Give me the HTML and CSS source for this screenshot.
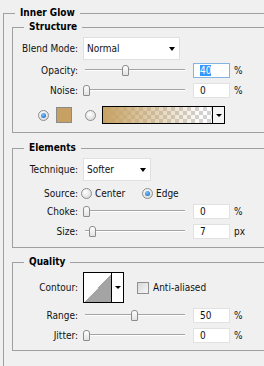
FILE: index.html
```html
<!DOCTYPE html>
<html>
<head>
<meta charset="utf-8">
<title>Inner Glow</title>
<link rel="stylesheet" href="styles.css">
</head>
<body>
<fieldset class="panel">
  <legend>Inner Glow</legend>

  <fieldset class="group">
    <legend>Structure</legend>
    <div class="rows">
      <div class="row tall">
        <span class="lbl">Blend Mode:</span>
        <div class="select blend">Normal</div>
      </div>
      <div class="row tight">
        <span class="lbl">Opacity:</span>
        <div class="slider"><span class="thumb" style="left:39px"></span></div>
        <div class="num focus"><span class="sel">40</span></div>
        <span class="unit">%</span>
      </div>
      <div class="row">
        <span class="lbl">Noise:</span>
        <div class="slider"><span class="thumb" style="left:0px"></span></div>
        <div class="num">0</div>
        <span class="unit">%</span>
      </div>
      <div class="row colors">
        <span class="radio on first"></span>
        <span class="swatch"></span>
        <span class="radio second"></span>
        <div class="grad"><span class="ramp"></span><span class="drop"></span></div>
      </div>
    </div>
  </fieldset>

  <fieldset class="group elements">
    <legend>Elements</legend>
    <div class="rows">
      <div class="row tall">
        <span class="lbl">Technique:</span>
        <div class="select technique">Softer</div>
      </div>
      <div class="row">
        <span class="lbl">Source:</span>
        <label class="opt center"><span class="radio"></span>Center</label>
        <label class="opt"><span class="radio on"></span>Edge</label>
      </div>
      <div class="row tight">
        <span class="lbl">Choke:</span>
        <div class="slider"><span class="thumb" style="left:0px"></span></div>
        <div class="num">0</div>
        <span class="unit">%</span>
      </div>
      <div class="row">
        <span class="lbl">Size:</span>
        <div class="slider"><span class="thumb" style="left:6px"></span></div>
        <div class="num">7</div>
        <span class="unit">px</span>
      </div>
    </div>
  </fieldset>

  <fieldset class="group quality">
    <legend>Quality</legend>
    <div class="rows">
      <div class="row contour-row">
        <span class="lbl">Contour:</span>
        <div class="contour"><span class="curve"></span><span class="drop"></span></div>
        <span class="check"></span>
        <span class="check-text">Anti-aliased</span>
      </div>
      <div class="row">
        <span class="lbl">Range:</span>
        <div class="slider"><span class="thumb" style="left:48px"></span></div>
        <div class="num">50</div>
        <span class="unit">%</span>
      </div>
      <div class="row">
        <span class="lbl">Jitter:</span>
        <div class="slider"><span class="thumb" style="left:0px"></span></div>
        <div class="num">0</div>
        <span class="unit">%</span>
      </div>
    </div>
  </fieldset>
</fieldset>
</body>
</html>
```

FILE: styles.css
```css
body {
  margin:0;
  background:#f0f0f0;
  font-family:"DejaVu Sans Condensed", "DejaVu Sans", sans-serif;
  font-size:10px;
  color:#111;
  overflow:hidden;
}

fieldset {
  min-width:0;
}

legend {
  font-weight:bold;
  line-height:14px;
  padding:0 5px;
  color:#000;
}

.panel {
  margin:6px 0 0 3px;
  padding:0 0 0 8px;
  border:0;
  border-top:1px solid #a0a0a0;
  border-left:1px solid #a0a0a0;
  min-height:366px;
}

.panel > legend {
  margin-left:3px;
}

.group {
  margin:0;
  padding:3px 0 7px;
  border:1px solid #a0a0a0;
  border-right:0;
}

.group > legend {
  margin-left:11px;
}

.group.elements {
  margin-top:8px;
  padding-bottom:8px;
}

.group.quality {
  margin-top:7px;
}

.rows {
  display:flex;
  flex-direction:column;
  gap:5px;
}

.row {
  display:flex;
  align-items:center;
  height:15px;
}

.row.tall {
  height:23px;
}

.row.tight {
  margin-top:-2px;
}

.lbl {
  width:65px;
  flex:none;
  text-align:right;
}

/* dropdowns */
.select {
  margin-left:5px;
  height:23px;
  box-sizing:border-box;
  background:#fff;
  border:1px solid #e0e0e0;
  display:flex;
  align-items:center;
  justify-content:space-between;
  padding:0 4px 0 3px;
}

.select::after {
  content:"";
  border-left:3.5px solid transparent;
  border-right:3.5px solid transparent;
  border-top:4px solid #000;
}

.select.blend {
  width:97px;
}

.select.technique {
  width:68px;
}

/* sliders */
.slider {
  position:relative;
  width:102px;
  height:15px;
  margin-left:5px;
  flex:none;
}

.slider::before {
  content:"";
  position:absolute;
  left:2px;
  right:0;
  top:6px;
  border-top:1px solid #a4a4a4;
  border-bottom:1px solid #fff;
}

.thumb {
  position:absolute;
  top:2px;
  width:7px;
  height:11px;
  box-sizing:border-box;
  border:1px solid #8c8c8c;
  border-radius:3px 3px 1px 1px;
  background:linear-gradient(#fff, #e2e2e2);
}

.num {
  margin-left:8px;
  width:37px;
  height:15px;
  box-sizing:border-box;
  background:#fff;
  border:1px solid #e2e2e2;
  padding-left:6px;
  line-height:13px;
  flex:none;
}

.num.focus {
  border-color:#84b4e4;
}

.sel {
  background:#3399ff;
  color:#fff;
}

.unit {
  margin-left:4px;
}

/* radios and boxes */
.radio {
  width:11px;
  height:11px;
  box-sizing:border-box;
  border-radius:50%;
  border:1px solid #8e8e8e;
  background:radial-gradient(circle at 40% 35%, #fff, #d2d2d2);
  position:relative;
  flex:none;
}

.radio.on::after {
  content:"";
  position:absolute;
  left:2px;
  top:2px;
  width:5px;
  height:5px;
  border-radius:50%;
  background:radial-gradient(circle at 40% 35%, #7cc8ff, #0b5cae);
}

.row.colors {
  height:20px;
  margin-top:2px;
}

.radio.first {
  margin-left:25px;
}

.radio.second {
  margin-left:13px;
}

.swatch {
  margin-left:7px;
  width:16px;
  height:16px;
  box-sizing:border-box;
  border:1px solid #8a8a8a;
  background:#c6a163;
}

.grad {
  margin-left:6px;
  width:123px;
  height:18px;
  box-sizing:border-box;
  border:1px solid #000;
  display:flex;
}

.grad .ramp {
  flex:1;
  background:
    linear-gradient(to right, #c6a163, rgba(198,161,99,0) 92%),
    repeating-conic-gradient(#d2d2d2 0 25%, #fff 0 50%) 0 0/8px 8px;
}

.drop {
  width:11px;
  border-left:1px solid #000;
  display:flex;
  align-items:center;
  justify-content:center;
}

.grad .drop {
  background:#f4f4f4;
}

.drop::after {
  content:"";
  border-left:3px solid transparent;
  border-right:3px solid transparent;
  border-top:3px solid #000;
}

.opt {
  display:flex;
  align-items:center;
  gap:3px;
}

.opt.center {
  margin-left:3px;
  width:61px;
}

.row.contour-row {
  height:31px;
}

.contour {
  margin-left:5px;
  width:41px;
  height:31px;
  box-sizing:border-box;
  border:1px solid #000;
  background:#fff;
  display:flex;
  padding:1px 0 0 1px;
}

.contour .curve {
  flex:1;
  background:linear-gradient(to top left, #a4a4a4 50%, #fff 50%);
}

.contour .drop {
  margin-top:-1px;
  background:#fff;
}

.check {
  margin-left:13px;
  width:12px;
  height:12px;
  box-sizing:border-box;
  border:1px solid #8e8f8f;
  background:linear-gradient(135deg, #d8d8d8, #f6f6f6);
}

.check-text {
  margin-left:4px;
}
```
